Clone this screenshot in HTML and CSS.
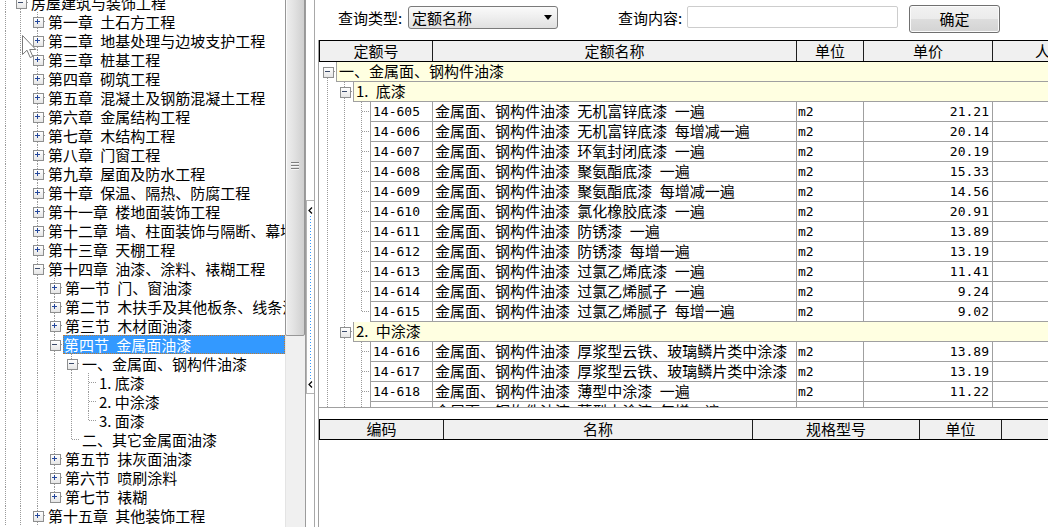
FILE: index.html
```html
<!DOCTYPE html>
<html lang="zh-CN">
<head>
<meta charset="utf-8">
<title>定额查询</title>
<link rel="stylesheet" href="styles.css">
</head>
<body>
<div class="app">
  <svg class="cursor" width="16" height="25" viewBox="0 0 16 25"><path d="M0.5 0.5 V19.5 L5 15.2 L8.2 22.5 L10.8 21.4 L7.7 14.5 H13.8 Z" fill="#fff" stroke="#5a5a5a" stroke-width="1" stroke-linejoin="miter"/></svg>
  <div class="left">
    <div class="tree">
      <div class="tree-inner">
        <div class="tr"><i class="g v"></i><i class="c full m"></i><span class="lbl">房屋建筑与装饰工程</span></div>
        <div class="tr"><i class="g v"></i><i class="g v"></i><i class="c full p"></i><span class="lbl">第一章 土石方工程</span></div>
        <div class="tr"><i class="g v"></i><i class="g v"></i><i class="c full p"></i><span class="lbl">第二章 地基处理与边坡支护工程</span></div>
        <div class="tr"><i class="g v"></i><i class="g v"></i><i class="c full p"></i><span class="lbl">第三章 桩基工程</span></div>
        <div class="tr"><i class="g v"></i><i class="g v"></i><i class="c full p"></i><span class="lbl">第四章 砌筑工程</span></div>
        <div class="tr"><i class="g v"></i><i class="g v"></i><i class="c full p"></i><span class="lbl">第五章 混凝土及钢筋混凝土工程</span></div>
        <div class="tr"><i class="g v"></i><i class="g v"></i><i class="c full p"></i><span class="lbl">第六章 金属结构工程</span></div>
        <div class="tr"><i class="g v"></i><i class="g v"></i><i class="c full p"></i><span class="lbl">第七章 木结构工程</span></div>
        <div class="tr"><i class="g v"></i><i class="g v"></i><i class="c full p"></i><span class="lbl">第八章 门窗工程</span></div>
        <div class="tr"><i class="g v"></i><i class="g v"></i><i class="c full p"></i><span class="lbl">第九章 屋面及防水工程</span></div>
        <div class="tr"><i class="g v"></i><i class="g v"></i><i class="c full p"></i><span class="lbl">第十章 保温、隔热、防腐工程</span></div>
        <div class="tr"><i class="g v"></i><i class="g v"></i><i class="c full p"></i><span class="lbl">第十一章 楼地面装饰工程</span></div>
        <div class="tr"><i class="g v"></i><i class="g v"></i><i class="c full p"></i><span class="lbl">第十二章 墙、柱面装饰与隔断、幕墙工程</span></div>
        <div class="tr"><i class="g v"></i><i class="g v"></i><i class="c full p"></i><span class="lbl">第十三章 天棚工程</span></div>
        <div class="tr"><i class="g v"></i><i class="g v"></i><i class="c full m"></i><span class="lbl">第十四章 油漆、涂料、裱糊工程</span></div>
        <div class="tr"><i class="g v"></i><i class="g v"></i><i class="g v"></i><i class="c full p"></i><span class="lbl">第一节 门、窗油漆</span></div>
        <div class="tr"><i class="g v"></i><i class="g v"></i><i class="g v"></i><i class="c full p"></i><span class="lbl">第二节 木扶手及其他板条、线条油漆</span></div>
        <div class="tr"><i class="g v"></i><i class="g v"></i><i class="g v"></i><i class="c full p"></i><span class="lbl">第三节 木材面油漆</span></div>
        <div class="tr sel"><i class="g v"></i><i class="g v"></i><i class="g v"></i><i class="c full m"></i><span class="lbl">第四节 金属面油漆</span></div>
        <div class="tr"><i class="g v"></i><i class="g v"></i><i class="g v"></i><i class="g v"></i><i class="c full m"></i><span class="lbl">一、金属面、钢构件油漆</span></div>
        <div class="tr"><i class="g v"></i><i class="g v"></i><i class="g v"></i><i class="g v"></i><i class="g v"></i><i class="c full"></i><span class="lbl leaf">1. 底漆</span></div>
        <div class="tr"><i class="g v"></i><i class="g v"></i><i class="g v"></i><i class="g v"></i><i class="g v"></i><i class="c full"></i><span class="lbl leaf">2. 中涂漆</span></div>
        <div class="tr"><i class="g v"></i><i class="g v"></i><i class="g v"></i><i class="g v"></i><i class="g v"></i><i class="c"></i><span class="lbl leaf">3. 面漆</span></div>
        <div class="tr"><i class="g v"></i><i class="g v"></i><i class="g v"></i><i class="g v"></i><i class="c"></i><span class="lbl">二、其它金属面油漆</span></div>
        <div class="tr"><i class="g v"></i><i class="g v"></i><i class="g v"></i><i class="c full p"></i><span class="lbl">第五节 抹灰面油漆</span></div>
        <div class="tr"><i class="g v"></i><i class="g v"></i><i class="g v"></i><i class="c full p"></i><span class="lbl">第六节 喷刷涂料</span></div>
        <div class="tr"><i class="g v"></i><i class="g v"></i><i class="g v"></i><i class="c p"></i><span class="lbl">第七节 裱糊</span></div>
        <div class="tr"><i class="g v"></i><i class="g v"></i><i class="c full p"></i><span class="lbl">第十五章 其他装饰工程</span></div>
      </div>
    </div>
    <div class="vscroll">
      <div class="thumb"><span class="grip"></span></div>
    </div>
  </div>
  <div class="splitter">
    <div class="split-btn">
      <svg class="chev" width="5" height="7" viewBox="0 0 5 7"><polyline points="4,0.5 1,3.5 4,6.5" fill="none" stroke="#000" stroke-width="1.2"/></svg>
      <span class="dots"></span>
      <svg class="chev" width="5" height="7" viewBox="0 0 5 7"><polyline points="4,0.5 1,3.5 4,6.5" fill="none" stroke="#000" stroke-width="1.2"/></svg>
    </div>
  </div>
  <div class="right">
    <div class="query">
      <span class="qlabel">查询类型:</span>
      <div class="select"><span>定额名称</span><i class="arrow"></i></div>
      <span class="qlabel q2">查询内容:</span>
      <div class="input"></div>
      <div class="btn">确定</div>
    </div>
    <div class="panes">
      <div class="grid">
        <div class="gh">
          <div class="h1">定额号</div>
          <div class="h2">定额名称</div>
          <div class="h3">单位</div>
          <div class="h4">单价</div>
          <div class="h5">人工费</div>
        </div>
        <div class="gr"><i class="c first m"></i><div class="grp">一、金属面、钢构件油漆</div></div>
        <div class="gr"><i class="g v"></i><i class="c full m"></i><div class="grp">1. 底漆</div></div>
        <div class="gr"><i class="g v"></i><i class="g v"></i><i class="c full"></i><span class="cd">14-605</span><span class="nm">金属面、钢构件油漆 无机富锌底漆 一遍</span><span class="un">m2</span><span class="pr">21.21</span><span class="lb"></span></div>
        <div class="gr"><i class="g v"></i><i class="g v"></i><i class="c full"></i><span class="cd">14-606</span><span class="nm">金属面、钢构件油漆 无机富锌底漆 每增减一遍</span><span class="un">m2</span><span class="pr">20.14</span><span class="lb"></span></div>
        <div class="gr"><i class="g v"></i><i class="g v"></i><i class="c full"></i><span class="cd">14-607</span><span class="nm">金属面、钢构件油漆 环氧封闭底漆 一遍</span><span class="un">m2</span><span class="pr">20.19</span><span class="lb"></span></div>
        <div class="gr"><i class="g v"></i><i class="g v"></i><i class="c full"></i><span class="cd">14-608</span><span class="nm">金属面、钢构件油漆 聚氨酯底漆 一遍</span><span class="un">m2</span><span class="pr">15.33</span><span class="lb"></span></div>
        <div class="gr"><i class="g v"></i><i class="g v"></i><i class="c full"></i><span class="cd">14-609</span><span class="nm">金属面、钢构件油漆 聚氨酯底漆 每增减一遍</span><span class="un">m2</span><span class="pr">14.56</span><span class="lb"></span></div>
        <div class="gr"><i class="g v"></i><i class="g v"></i><i class="c full"></i><span class="cd">14-610</span><span class="nm">金属面、钢构件油漆 氯化橡胶底漆 一遍</span><span class="un">m2</span><span class="pr">20.91</span><span class="lb"></span></div>
        <div class="gr"><i class="g v"></i><i class="g v"></i><i class="c full"></i><span class="cd">14-611</span><span class="nm">金属面、钢构件油漆 防锈漆 一遍</span><span class="un">m2</span><span class="pr">13.89</span><span class="lb"></span></div>
        <div class="gr"><i class="g v"></i><i class="g v"></i><i class="c full"></i><span class="cd">14-612</span><span class="nm">金属面、钢构件油漆 防锈漆 每增一遍</span><span class="un">m2</span><span class="pr">13.19</span><span class="lb"></span></div>
        <div class="gr"><i class="g v"></i><i class="g v"></i><i class="c full"></i><span class="cd">14-613</span><span class="nm">金属面、钢构件油漆 过氯乙烯底漆 一遍</span><span class="un">m2</span><span class="pr">11.41</span><span class="lb"></span></div>
        <div class="gr"><i class="g v"></i><i class="g v"></i><i class="c full"></i><span class="cd">14-614</span><span class="nm">金属面、钢构件油漆 过氯乙烯腻子 一遍</span><span class="un">m2</span><span class="pr">9.24</span><span class="lb"></span></div>
        <div class="gr"><i class="g v"></i><i class="g v"></i><i class="c"></i><span class="cd">14-615</span><span class="nm">金属面、钢构件油漆 过氯乙烯腻子 每增一遍</span><span class="un">m2</span><span class="pr">9.02</span><span class="lb"></span></div>
        <div class="gr"><i class="g v"></i><i class="c full m"></i><div class="grp">2. 中涂漆</div></div>
        <div class="gr"><i class="g v"></i><i class="g v"></i><i class="c full"></i><span class="cd">14-616</span><span class="nm">金属面、钢构件油漆 厚浆型云铁、玻璃鳞片类中涂漆</span><span class="un">m2</span><span class="pr">13.89</span><span class="lb"></span></div>
        <div class="gr"><i class="g v"></i><i class="g v"></i><i class="c full"></i><span class="cd">14-617</span><span class="nm">金属面、钢构件油漆 厚浆型云铁、玻璃鳞片类中涂漆</span><span class="un">m2</span><span class="pr">13.19</span><span class="lb"></span></div>
        <div class="gr"><i class="g v"></i><i class="g v"></i><i class="c full"></i><span class="cd">14-618</span><span class="nm">金属面、钢构件油漆 薄型中涂漆 一遍</span><span class="un">m2</span><span class="pr">11.22</span><span class="lb"></span></div>
        <div class="gr cut"><i class="g v"></i><i class="g v"></i><i class="c"></i><span class="cd">14-619</span><span class="nm">金属面、钢构件油漆 薄型中涂漆 每增一遍</span><span class="un">m2</span><span class="pr">10.64</span><span class="lb"></span></div>
      </div>
      <div class="detail">
        <div class="dh">
          <div class="d1">编码</div>
          <div class="d2">名称</div>
          <div class="d3">规格型号</div>
          <div class="d4">单位</div>
          <div class="d5">数量</div>
        </div>
      </div>
    </div>
  </div>
</div>
</body>
</html>
```

FILE: styles.css
```css
* { box-sizing: border-box; }
html, body { margin: 0; padding: 0; }
body {
  width: 1048px;
  height: 527px;
  overflow: hidden;
  background: #fff;
  color: #000;
  font-family: "Noto Sans CJK SC", "Noto Sans", sans-serif;
  font-size: 15px;
}
:root {
  --dv: repeating-linear-gradient(to bottom, #9a9a9a 0 1px, transparent 1px 2px);
  --dh: repeating-linear-gradient(to right, #9a9a9a 0 1px, transparent 1px 2px);
}
.app { display: flex; height: 527px; position: relative; overflow: hidden; }

.cursor { position: absolute; left: 22px; top: 35px; opacity: 0.8; }

/* ---------- left tree ---------- */
.left { display: flex; width: 305px; flex: none; }
.tree { width: 285px; flex: none; overflow: hidden; background: #fff; }
.tree-inner { margin-top: -7px; margin-left: -3px; }
.tr { display: flex; height: 19px; line-height: 19px; white-space: nowrap; }
.tr > .g:first-child { width: 15px; }

.g, .c { flex: none; width: 17px; height: 19px; position: relative; display: block; }
.g.v { background: var(--dv) 8px 0 / 1px 100% no-repeat; }
.c {
  background:
    var(--dh) 9px 9px / 8px 1px no-repeat,
    var(--dv) 8px 0 / 1px 10px no-repeat;
}
.c.full {
  background:
    var(--dh) 9px 9px / 8px 1px no-repeat,
    var(--dv) 8px 0 / 1px 100% no-repeat;
}
.c.first {
  background:
    var(--dh) 9px 9px / 8px 1px no-repeat,
    var(--dv) 8px 10px / 1px 100% no-repeat;
}
.c.p::before, .c.m::before {
  content: "";
  position: absolute;
  left: 4px; top: 5px;
  width: 9px; height: 9px;
  border: 1px solid #8e8f8f;
  background: linear-gradient(#ffffff, #e6e6e6);
}
.c.m::after {
  content: "";
  position: absolute;
  left: 6px; top: 9px;
  width: 5px; height: 1px;
  background: #3a4a6a;
}
.c.p::after {
  content: "";
  position: absolute;
  left: 6px; top: 7px;
  width: 5px; height: 5px;
  background:
    linear-gradient(#24479b, #24479b) 0 2px / 5px 1px no-repeat,
    linear-gradient(#24479b, #24479b) 2px 0 / 1px 5px no-repeat;
}
.lbl { flex: 1; padding-left: 2px; word-spacing: 4px; overflow: hidden; }
.lbl.leaf { word-spacing: 0; }
.tr.sel .lbl {
  background: #3399ff;
  color: #fff;
  outline: 1px dotted #c07a30;
  outline-offset: -1px;
  padding-left: 1px;
}

/* scrollbar */
.vscroll {
  width: 20px;
  flex: none;
  background: #f0f0f0;
  border-left: 1px solid #e4e4e4;
  display: flex;
  flex-direction: column;
}
.thumb {
  height: 339px;
  margin-top: -3px;
  margin-left: -1px;
  border: 1px solid #979797;
  border-radius: 0 0 2px 2px;
  background: linear-gradient(to right, #efefef, #e2e2e2 45%, #cfcfcf);
  box-shadow: inset 1px 0 0 #fafafa;
  display: flex;
  align-items: center;
  justify-content: center;
}
.grip {
  width: 8px;
  height: 9px;
  margin-left: -1px;
  background: repeating-linear-gradient(to bottom, #7f7f7f 0 1px, #f6f6f6 1px 2px, transparent 2px 3px);
}

/* splitter */
.splitter {
  width: 10px;
  flex: none;
  border-left: 1px solid #9c9c9c;
  border-right: 1px solid #a8a8a8;
  background: #fff;
  padding-top: 200px;
}
.split-btn {
  height: 194px;
  border: 1px solid #b4b4b4;
  border-right: none;
  display: flex;
  flex-direction: column;
  align-items: center;
  padding: 6px 0 5px;
  gap: 2px;
}
.chev { display: block; flex: none; }
.dots {
  flex: 1;
  width: 1px;
  background: repeating-linear-gradient(to bottom, #3399ff 0 1px, transparent 1px 3px);
}

/* ---------- right ---------- */
.right {
  flex: 1;
  min-width: 0;
  display: flex;
  flex-direction: column;
  padding-left: 3px;
  overflow: hidden;
}
.query {
  height: 40px;
  flex: none;
  display: flex;
  align-items: flex-start;
  padding: 5px 0 0 20px;
}
.qlabel { width: 70px; flex: none; line-height: 23px; margin-top: 1px; white-space: nowrap; }
.q2 { width: 69px; margin-left: 60px; }
.select {
  width: 150px;
  height: 23px;
  flex: none;
  margin-top: 1px;
  border: 1px solid #7a7a7a;
  border-radius: 3px;
  background: linear-gradient(#fafafa, #eeeeee 50%, #e0e0e0);
  display: flex;
  align-items: center;
  padding-left: 3px;
  line-height: 21px;
}
.arrow {
  margin-left: auto;
  margin-right: 5px;
  width: 0; height: 0;
  border-left: 4px solid transparent;
  border-right: 4px solid transparent;
  border-top: 5px solid #000;
}
.input {
  width: 211px;
  height: 22px;
  flex: none;
  margin-top: 1px;
  border: 1px solid #cdcdcd;
  border-radius: 2px;
  background: #fff;
}
.btn {
  width: 91px;
  height: 28px;
  flex: none;
  margin-left: 11px;
  border: 1px solid #707070;
  border-radius: 3px;
  background: linear-gradient(#f2f2f2 0%, #ebebeb 50%, #dddddd 51%, #d3d3d3 100%);
  box-shadow: inset 0 0 0 1px #fbfbfb;
  text-align: center;
  line-height: 25px;
}

.panes {
  flex: 1;
  min-height: 0;
  border-left: 1px solid #a0a0a0;
  display: flex;
  flex-direction: column;
}
.grid {
  height: 368px;
  flex: none;
  overflow: hidden;
  border-bottom: 1px solid #a0a0a0;
}
.gh {
  display: flex;
  height: 22px;
  border-top: 1px solid #000;
  border-bottom: 1px solid #000;
  background: #f0f0f0;
}
.gh > div {
  flex: none;
  border-right: 1px solid #1e1e1e;
  text-align: center;
  line-height: 20px;
  white-space: nowrap;
}
.gh .h1 { width: 114px; border-left: 1px solid #000; }
.gh .h2 { width: 364px; }
.gh .h3 { width: 67px; }
.gh .h4 { width: 129px; }
.gh .h5 { width: 130px; }

.gr { display: flex; height: 20px; white-space: nowrap; }
.gr.cut { height: 5px; overflow: hidden; align-items: flex-start; }
.gr .g, .gr .c { height: 20px; }
.grp {
  flex: none;
  width: 800px;
  height: 20px;
  background: #ffffe1;
  border-left: 1px solid #a0a0a0;
  border-bottom: 1px solid #a0a0a0;
  padding-left: 2px;
  line-height: 17px;
  word-spacing: 4px;
}
.cd, .nm, .un, .pr, .lb {
  flex: none;
  height: 20px;
  border-right: 1px solid #a0a0a0;
  border-bottom: 1px solid #a0a0a0;
  overflow: hidden;
}
.cd {
  width: 63px;
  border-left: 1px solid #a0a0a0;
  padding-left: 2px;
  font-family: "DejaVu Sans Mono", monospace;
  font-size: 13px;
  line-height: 19px;
}
.nm { width: 364px; padding-left: 2px; line-height: 17px; word-spacing: 4px; }
.un {
  width: 67px;
  padding-left: 1px;
  font-family: "DejaVu Sans Mono", monospace;
  font-size: 13px;
  line-height: 19px;
}
.pr {
  width: 129px;
  text-align: right;
  padding-right: 3px;
  font-family: "DejaVu Sans Mono", monospace;
  font-size: 13px;
  line-height: 19px;
}
.lb { width: 130px; }

.detail { margin-top: 11px; flex: 1; }
.dh {
  display: flex;
  height: 21px;
  border-top: 1px solid #000;
  border-bottom: 1px solid #000;
  border-left: 1px solid #000;
  background: #f0f0f0;
  white-space: nowrap;
}
.dh > div {
  flex: none;
  border-right: 1px solid #1e1e1e;
  text-align: center;
  line-height: 18px;
}
.dh .d1 { width: 124px; }
.dh .d2 { width: 309px; }
.dh .d3 { width: 167px; }
.dh .d4 { width: 82px; }
.dh .d5 { width: 220px; }
```
